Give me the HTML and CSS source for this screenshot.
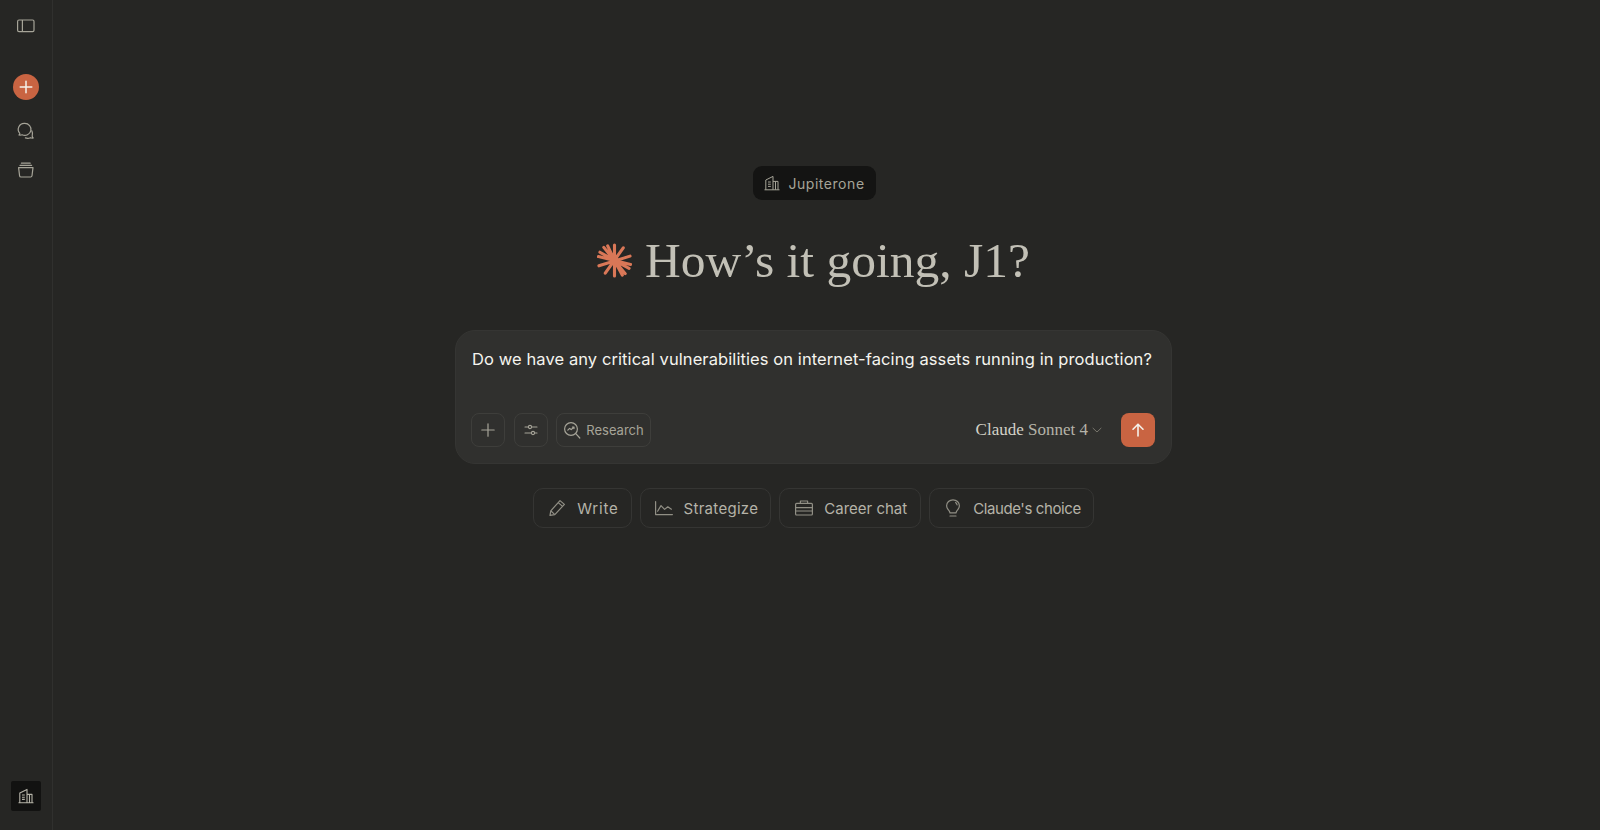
FILE: index.html
```html
<!DOCTYPE html>
<html lang="en">
<head>
  <meta charset="UTF-8">
  <meta name="viewport" content="width=device-width, initial-scale=1.0">
  <title>Claude</title>
  <link rel="stylesheet" href="styles.css">
</head>
<body>
  <div class="app">
    <aside class="sidebar">
      <button class="side-btn side-toggle" aria-label="Toggle sidebar">
        <svg width="18" height="18" viewBox="0 0 18 18" fill="none" stroke="currentColor" stroke-width="1.2"><rect x="0.6" y="3" width="16.4" height="11.6" rx="1.4"/><path d="M5.4 3v11.6"/></svg>
      </button>
      <button class="side-new" aria-label="New chat">
        <svg width="14" height="14" viewBox="0 0 14 14" fill="none" stroke="currentColor" stroke-width="1.5" stroke-linecap="round"><path d="M7 1.2v11.6M1.2 7h11.6"/></svg>
      </button>
      <button class="side-btn side-chats" aria-label="Chats">
        <svg width="20" height="20" viewBox="0 0 20 20" fill="none" stroke="currentColor" stroke-width="1.2" stroke-linecap="round" stroke-linejoin="round"><path d="M8.700 1.400a6.200 6 0 1 1-2.600 11.400c-1 .3-2 .4-3.100.2.500-.5.800-1 .8-1.600A6 6 0 0 1 8.700 1.400z"/><path d="M15.800 8.800c1 2 1 3.800.4 5.300.1.800.4 1.400 1 1.900-1 .2-1.900.1-2.800-.3-1.500.7-3.300.8-5 .2"/></svg>
      </button>
      <button class="side-btn side-projects" aria-label="Projects">
        <svg width="18" height="18" viewBox="0 0 18 18" fill="none" stroke="currentColor" stroke-width="1.2" stroke-linecap="round" stroke-linejoin="round"><path d="M1.600 6.600h14.400l-1 8.200c-.1.700-.6 1.200-1.300 1.200H3.900c-.7 0-1.200-.5-1.300-1.200z"/><path d="M3 4.400h11.600M4.400 2.200h8.800"/></svg>
      </button>
      <div class="org-tile">
        <svg width="16" height="16" viewBox="0 0 16 16" fill="none" stroke="currentColor" stroke-width="1.1" stroke-linejoin="round"><path d="M.5 14.800h15M1.800 14.800V5l7.200-3.600v13.400M9 6.400h5v8.400M4 7h2.800M4 9.200h2.800M4 11.400h2.800M11.500 6.400v8.400"/></svg>
      </div>
    </aside>

    <main class="main">
      <div class="org-badge">
        <svg width="16" height="16" viewBox="0 0 16 16" fill="none" stroke="currentColor" stroke-width="1" stroke-linejoin="round"><path d="M.5 14.800h15M1.800 14.800V5l7.200-3.600v13.400M9 6.400h5v8.400M4 7h2.800M4 9.200h2.800M4 11.400h2.800M11.500 6.400v8.400"/></svg>
        <span>Jupiterone</span>
      </div>

      <h1 class="greeting">
        <svg class="star" width="35" height="35" viewBox="0 0 36 36" fill="none" stroke="#d97757" stroke-width="3.200" stroke-linecap="round"><path d="M18 2v32M7 4.500l22 27M1.500 14l33 8M2 23.500l32-10M8.500 31L27 5M18 18l-7-15M18 18l8 15M18 18L3 9.500M18 18l15 8"/></svg>
        <span>How’s it going, J1?</span>
      </h1>

      <section class="composer">
        <p class="prompt">Do we have any critical vulnerabilities on internet-facing assets running in production?</p>
        <div class="composer-bar">
          <button class="tool-btn tool-add" aria-label="Add">
            <svg width="16" height="16" viewBox="0 0 16 16" fill="none" stroke="currentColor" stroke-width="1.2" stroke-linecap="round"><path d="M8 1.800v12.400M1.800 8h12.400"/></svg>
          </button>
          <button class="tool-btn" aria-label="Settings">
            <svg width="16" height="16" viewBox="0 0 16 16" fill="none" stroke="currentColor" stroke-width="1.100" stroke-linecap="round"><path d="M2 5h3.400M8.600 5H14M2 11h6.400M11.600 11H14"/><circle cx="7" cy="5" r="1.600"/><circle cx="10" cy="11" r="1.600"/></svg>
          </button>
          <button class="tool-btn research">
            <svg width="18" height="18" viewBox="0 0 18 18" fill="none" stroke="currentColor" stroke-width="1.200" stroke-linecap="round" stroke-linejoin="round"><circle cx="8" cy="8" r="6.400"/><path d="M12.800 12.600l4 4.400M4.800 9.200l1.800-1.800 1.600 1.200 2.600-2.400M9.400 6h1.600v1.600"/></svg>
            <span>Research</span>
          </button>
          <div class="model-pick">
            <span class="model-name"><b>Claude</b> Sonnet 4</span>
            <svg width="10" height="10" viewBox="0 0 10 10" fill="none" stroke="currentColor" stroke-width="1" stroke-linecap="round" stroke-linejoin="round"><path d="M1 3.200L5 7l4-3.800"/></svg>
          </div>
          <button class="send-btn" aria-label="Send">
            <svg width="16" height="16" viewBox="0 0 16 16" fill="none" stroke="currentColor" stroke-width="1.600" stroke-linecap="round" stroke-linejoin="round"><path d="M8 14V2.400M3 7.200l5-5 5 5"/></svg>
          </button>
        </div>
      </section>

      <div class="chips">
        <button class="chip chip-write">
          <svg width="20" height="20" viewBox="0 0 20 20" fill="none" stroke="currentColor" stroke-width="1.200" stroke-linejoin="round"><path d="M3 17.400l.8-4.600L13 2.600l4.400 3.800-9.600 10.200z"/><path d="M3.800 12.800l4 3.800M11.200 4.600l4.400 3.800"/></svg>
          <span>Write</span>
        </button>
        <button class="chip chip-strategize">
          <svg width="20" height="20" viewBox="0 0 20 20" fill="none" stroke="currentColor" stroke-width="1.200" stroke-linecap="round" stroke-linejoin="round"><path d="M1.600 3.600v13h16.800M3.600 13.200L7 7.600l3.600 3.800 3.200-2.600 3.600 2.400"/></svg>
          <span>Strategize</span>
        </button>
        <button class="chip chip-career">
          <svg width="20" height="20" viewBox="0 0 20 20" fill="none" stroke="currentColor" stroke-width="1.200" stroke-linejoin="round"><rect x="1.600" y="5.400" width="16.800" height="11.600" rx="1"/><path d="M6.400 5.400V3h7.200v2.400M1.600 9.600h16.800M1.600 13h16.800"/></svg>
          <span>Career chat</span>
        </button>
        <button class="chip chip-choice">
          <svg width="20" height="20" viewBox="0 0 20 20" fill="none" stroke="currentColor" stroke-width="1.200" stroke-linecap="round" stroke-linejoin="round"><path d="M7 14.800c-.2-1.400-.8-2-1.800-3.200C4.300 10.500 3.600 9.300 3.600 7.800 3.600 4.400 6.500 1.800 10 1.800s6.400 2.600 6.400 6c0 1.500-.7 2.700-1.600 3.800-1 1.200-1.600 1.800-1.800 3.200z"/><path d="M7 18h6M12.600 4.600c.8.600 1.300 1.400 1.500 2.400"/></svg>
          <span>Claude's choice</span>
        </button>
      </div>
    </main>
  </div>
</body>
</html>
```

FILE: styles.css
```css
* {
  box-sizing: border-box;
}

body {
  margin: 0;
  background: #262624;
  color: #c2c0b6;
  font-family: "Inter", "Liberation Sans", sans-serif;
}

button {
  font: inherit;
  color: inherit;
  background: none;
  border: 0;
  padding: 0;
}

.app {
  display: flex;
  height: 830px;
  overflow: hidden;
}

.sidebar {
  width: 53px;
  flex-shrink: 0;
  display: flex;
  flex-direction: column;
  align-items: center;
  border-right: 1px solid #30302e;
  padding-right: 1px;
}

.side-btn {
  display: flex;
  align-items: center;
  justify-content: center;
  width: 30px;
  height: 30px;
  color: #a6a498;
}

.side-toggle {
  margin-top: 11px;
}

.side-new {
  display: flex;
  align-items: center;
  justify-content: center;
  width: 26px;
  height: 26px;
  margin-top: 33px;
  border-radius: 50%;
  background: #c96442;
  color: #f5f1ea;
}

.side-chats {
  margin-top: 17px;
}

.side-projects {
  margin-top: 8px;
}

.org-tile {
  display: flex;
  align-items: center;
  justify-content: center;
  width: 30px;
  height: 30px;
  margin-top: auto;
  margin-bottom: 19px;
  border-radius: 2px;
  background: #121211;
  color: #b5b3a8;
}

.main {
  flex: 1;
  display: flex;
  flex-direction: column;
  align-items: center;
  padding: 166px 26px 0 0;
}

.org-badge {
  display: flex;
  align-items: center;
  gap: 8px;
  height: 34px;
  margin-left: 2px;
  padding: 0 11px;
  border-radius: 9px;
  background: #141413;
  color: #a6a498;
  font-size: 14px;
  letter-spacing: 0.55px;
}

.greeting {
  display: flex;
  align-items: center;
  gap: 13px;
  margin: 30px 0 0;
  height: 60px;
  font-family: "Liberation Serif", "DejaVu Serif", serif;
  font-size: 49.5px;
  font-weight: 400;
  color: #c2c0b6;
}

.star {
  flex-shrink: 0;
}

.composer {
  width: 717px;
  height: 134px;
  margin-top: 40px;
  padding: 16px;
  border: 1px solid #353533;
  border-radius: 20px;
  background: #30302e;
  display: flex;
  flex-direction: column;
}

.prompt {
  margin: 0;
  height: 24px;
  line-height: 24px;
  font-size: 16.5px;
  letter-spacing: 0.09px;
  color: #f5f4ef;
  white-space: nowrap;
}

.composer-bar {
  display: flex;
  align-items: center;
  gap: 8px;
  margin-top: auto;
  margin-left: -1px;
}

.tool-btn {
  display: flex;
  align-items: center;
  justify-content: center;
  height: 34px;
  width: 34px;
  border: 1px solid #3e3e3b;
  border-radius: 8px;
  color: #a6a498;
  font-size: 13px;
}

.tool-add {
  margin-right: 1px;
}

.research {
  width: 95px;
  gap: 5px;
}

.model-pick {
  display: flex;
  align-items: center;
  gap: 4px;
  margin-left: auto;
  margin-right: 11px;
  font-family: "Liberation Serif", serif;
  font-size: 17px;
  color: #a6a498;
}

.model-name {
  color: #b5b3a8;
}

.model-name b {
  font-weight: 400;
  color: #d4d2c8;
}

.model-pick svg {
  color: #77756c;
}

.send-btn {
  display: flex;
  align-items: center;
  justify-content: center;
  width: 34px;
  height: 34px;
  border-radius: 8px;
  background: #c96442;
  color: #f5f1ea;
}

.chips {
  display: flex;
  gap: 8px;
  margin-top: 24px;
}

.chip {
  display: flex;
  align-items: center;
  gap: 10px;
  height: 40px;
  padding: 0 12px 0 13px;
  border: 1px solid #353533;
  border-radius: 10px;
  color: #b5b3a8;
  font-size: 15px;
}

.chip-write {
  letter-spacing: 0.8px;
}

.chip-strategize {
  letter-spacing: 0.3px;
}

.chip-career {
  padding: 0 13px 0 14px;
}

.chip-choice {
  letter-spacing: -0.4px;
}

.chip svg {
  color: #918f85;
}
```
